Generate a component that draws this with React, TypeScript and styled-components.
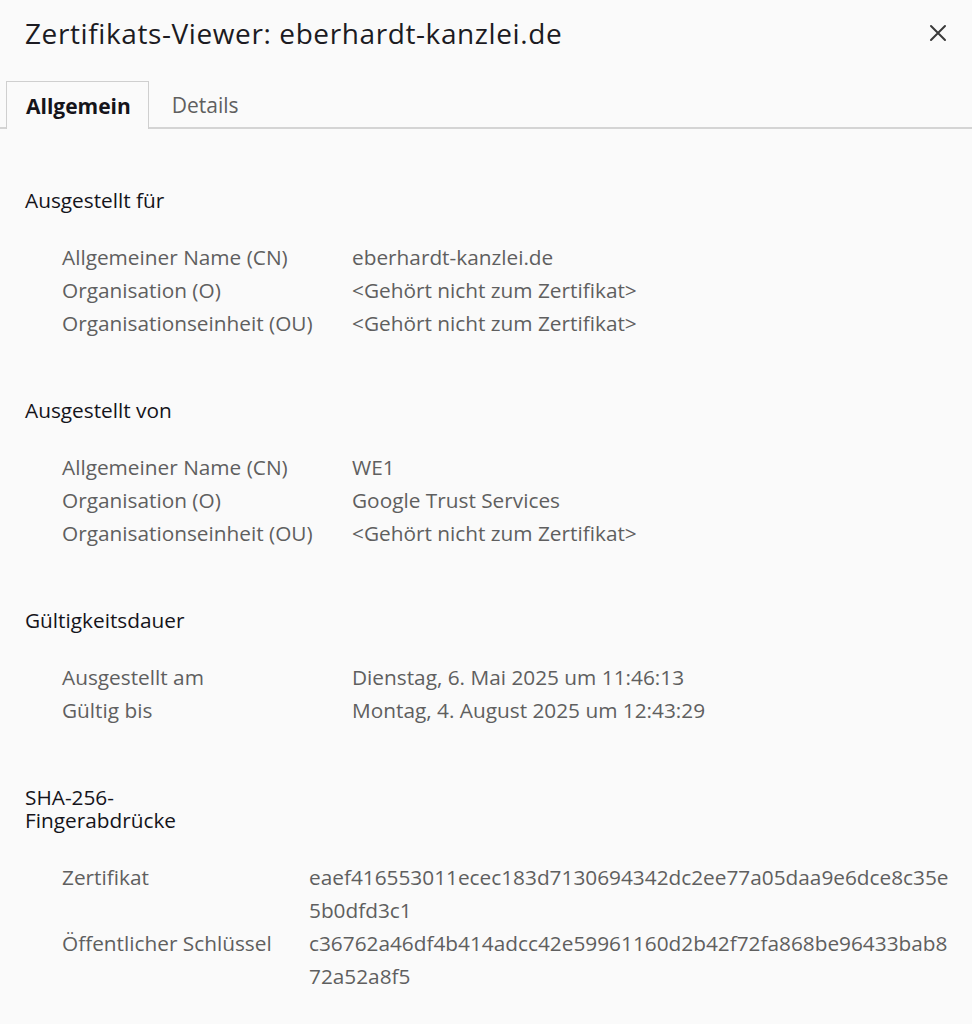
import styled, { createGlobalStyle } from "styled-components";

const GlobalStyle = createGlobalStyle`
  html, body {
    margin: 0;
    padding: 0;
    background: #fafafa;
  }
  body {
    font-family: "Open Sans", "Noto Sans", sans-serif;
    color: #1c1b22;
  }
`;

type Row = { label: string; value: string };
type Section = { title: string; labelWidth: number; rows: Row[]; mono?: boolean };

const sections: Section[] = [
  {
    title: "Ausgestellt für",
    labelWidth: 290,
    rows: [
      { label: "Allgemeiner Name (CN)", value: "eberhardt-kanzlei.de" },
      { label: "Organisation (O)", value: "<Gehört nicht zum Zertifikat>" },
      { label: "Organisationseinheit (OU)", value: "<Gehört nicht zum Zertifikat>" },
    ],
  },
  {
    title: "Ausgestellt von",
    labelWidth: 290,
    rows: [
      { label: "Allgemeiner Name (CN)", value: "WE1" },
      { label: "Organisation (O)", value: "Google Trust Services" },
      { label: "Organisationseinheit (OU)", value: "<Gehört nicht zum Zertifikat>" },
    ],
  },
  {
    title: "Gültigkeitsdauer",
    labelWidth: 290,
    rows: [
      { label: "Ausgestellt am", value: "Dienstag, 6. Mai 2025 um 11:46:13" },
      { label: "Gültig bis", value: "Montag, 4. August 2025 um 12:43:29" },
    ],
  },
  {
    title: "SHA-256-Fingerabdrücke",
    labelWidth: 247,
    mono: true,
    rows: [
      {
        label: "Zertifikat",
        value: "eaef416553011ecec183d7130694342dc2ee77a05daa9e6dce8c35e5b0dfd3c1",
      },
      {
        label: "Öffentlicher Schlüssel",
        value: "c36762a46df4b414adcc42e59961160d2b42f72fa868be96433bab872a52a8f5",
      },
    ],
  },
];

const App = () => {
  return (
    <>
      <GlobalStyle />
      <Dialog>
        <Header>
          <Title>Zertifikats-Viewer: eberhardt-kanzlei.de</Title>
          <CloseButton aria-label="Schließen">
            <svg width="18" height="18" viewBox="0 0 18 18">
              <path d="M2 2 L16 16 M16 2 L2 16" stroke="#3a3a3a" strokeWidth="2" strokeLinecap="round" />
            </svg>
          </CloseButton>
        </Header>
        <TabBar>
          <Tab $active>Allgemein</Tab>
          <Tab>Details</Tab>
        </TabBar>
        <Content>
          {sections.map((s) => (
            <SectionBlock key={s.title}>
              <SectionTitle>{s.title}</SectionTitle>
              <InfoTable $labelWidth={s.labelWidth}>
                {s.rows.map((r) => (
                  <InfoRow key={r.label}>
                    <Label>{r.label}</Label>
                    <Value $breakAll={s.mono}>{r.value}</Value>
                  </InfoRow>
                ))}
              </InfoTable>
            </SectionBlock>
          ))}
        </Content>
      </Dialog>
    </>
  );
};

export default App;

const Dialog = styled.div`
  width: 972px;
  min-height: 1024px;
  background: #fafafa;
`;

const Header = styled.div`
  height: 66px;
  padding: 0 25px;
  display: flex;
  align-items: center;
  justify-content: space-between;
  margin-bottom: 15px;
`;

const Title = styled.h1`
  margin: 0;
  font-size: 28px;
  font-weight: 400;
  color: #1c1b22;
  letter-spacing: 0.6px;
`;

const CloseButton = styled.button`
  border: none;
  background: transparent;
  padding: 0;
  width: 18px;
  height: 18px;
  display: flex;
  align-items: center;
  justify-content: center;
  cursor: pointer;
`;

const TabBar = styled.div`
  display: flex;
  gap: 3px;
  padding-left: 6px;
  border-bottom: 2px solid #d4d4d4;
  height: 46px;
`;

const Tab = styled.div<{ $active?: boolean }>`
  box-sizing: border-box;
  padding: 0 17px 0 19px;
  display: flex;
  align-items: center;
  font-size: 21px;
  font-weight: ${(p) => (p.$active ? 700 : 400)};
  color: ${(p) => (p.$active ? "#15141a" : "#5f5f5f")};
  background: #fafafa;
  border: 1px solid ${(p) => (p.$active ? "#cfcfcf" : "transparent")};
  border-bottom: none;
  margin-bottom: ${(p) => (p.$active ? "-2px" : "0")};
  height: ${(p) => (p.$active ? "48px" : "46px")};
`;

const Content = styled.div`
  padding: 1px 15px 0 25px;
`;

const SectionBlock = styled.section`
  margin-top: 59px;
`;

const SectionTitle = styled.h2`
  margin: 0 0 29px;
  max-width: 220px;
  font-size: 20.8px;
  line-height: 23px;
  font-weight: 400;
  color: #15141a;
`;

const InfoTable = styled.div<{ $labelWidth: number }>`
  display: grid;
  grid-template-columns: ${(p) => p.$labelWidth}px 1fr;
  padding-left: 37px;
`;

const InfoRow = styled.div`
  display: contents;
`;

const Label = styled.div`
  font-size: 20.8px;
  line-height: 33px;
  color: #5f5f5f;
`;

const Value = styled.div<{ $breakAll?: boolean }>`
  font-size: 20.8px;
  line-height: 33px;
  color: #5f5f5f;
  word-break: ${(p) => (p.$breakAll ? "break-all" : "normal")};
`;
